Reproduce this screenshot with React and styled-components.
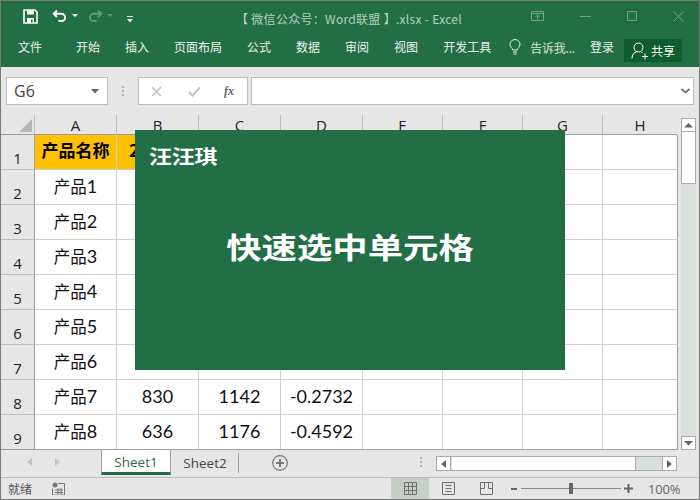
import React from 'react';
import styled, { createGlobalStyle } from 'styled-components';

const GREEN = '#226f46';
const CJK = '"Noto Sans CJK SC", "Noto Sans", sans-serif';
const CELLFONT = 'Lato, "Noto Sans CJK SC", sans-serif';

const Global = createGlobalStyle`
  html, body { margin: 0; padding: 0; }
  * { box-sizing: border-box; }
`;

const Win = styled.div`
  position: relative; width: 700px; height: 500px; overflow: hidden;
  border: 1px solid #7a7a7a; display: flex; flex-direction: column;
  background: #e6e6e6; font-family: ${CJK};
`;
const Title = styled.div`
  height: 33px; background: ${GREEN}; display: grid; grid-template-columns: 130px 1fr 168px; align-items: center;
  color: #a6c7b5; font-size: 12px; flex: none;
`;
const Qat = styled.div`display: flex; align-items: center; padding-left: 22px; height: 100%;`;
const TitleText = styled.div`
  text-align: center; font-size: 12px; letter-spacing: .3px; padding-left: 36px; white-space: nowrap; margin-top: 1px;
  font-family: "Noto Sans CJK SC", sans-serif; color: #b5d0c1;
`;
const WinBtns = styled.div`display: flex; align-items: center; height: 100%;`;
const WinBtn = styled.svg`flex: none; margin-right: ${p => p.$mr || 0}px; margin-top: -2px;`;
const QatIcon = styled.svg`flex: none; margin-right: ${p => p.$mr || 0}px; margin-left: ${p => p.$ml || 0}px;`;
const Ribbon = styled.div`
  height: 33px; background: ${GREEN}; display: flex; align-items: center; padding-left: 17px; flex: none;
  color: #ebf3ee; font-size: 12px; padding-bottom: 7px;
`;
const Tab = styled.span`margin-right: ${p => p.$mr || 25}px; white-space: nowrap; line-height: 16px;`;
const Tell = styled.span`color: #d6e5dc; margin-right: 15px; white-space: nowrap; margin-left: 9px; letter-spacing: -.2px;`;
const Share = styled.div`
  width: 58px; height: 23px; background: #0f5c2e; display: flex; align-items: center; padding-left: 7px; gap: 2px; color: #f2f7f4;
  margin-top: 7px; margin-left: -4px;
`;
const FormulaBar = styled.div`
  height: 48px; display: flex; align-items: flex-start; padding: 10px 5px 0 5px; flex: none; background: #e6e6e6;
`;
const Box = styled.div`
  height: 28px; background: #fff; border: 1px solid #bdbdbd; display: flex; align-items: center; flex: none;
`;
const NameBox = styled(Box)`width: 102px; padding: 0 8px 0 7px; justify-content: space-between; font: 16px "Open Sans", sans-serif; color: #444;`;
const Dots = styled.div`
  width: 30px; flex: none; display: flex; flex-direction: column; align-items: center; justify-content: center; gap: 2px; height: 28px;
`;
const Dot = styled.i`width: 2px; height: 2px; background: #b5b5b5; display: block;`;
const FxBox = styled(Box)`width: 110px; padding-left: 12px; justify-content: flex-start;`;
const Fx = styled.span`font: italic 700 12px "Liberation Serif", serif; color: #666; margin-left: 23px;`;
const FormulaInput = styled(Box)`flex: 1; margin-left: 3px; justify-content: flex-end; padding-right: 3px;`;

const Main = styled.div`display: flex; flex: none; height: 335px;`;
const Sheet = styled.div`
  width: 677px; display: grid; flex: none; background: #fff;
  grid-template-columns: 34px repeat(4, 82px) repeat(3, 80px) 75px;
  grid-template-rows: 20px repeat(9, 35px);
  height: 335px; overflow: hidden; border-bottom: 1px solid #9e9e9e;
`;
const Corner = styled.div`
  background: #e6e6e6; border-right: 1px solid #bdbdbd; border-bottom: 1px solid #9e9e9e;
  display: flex; align-items: flex-end; justify-content: flex-end; padding: 0 2px 2px 0;
`;
const ColHead = styled.div`
  background: #e6e6e6; border-right: 1px solid ${p => p.$last ? '#e6e6e6' : '#bdbdbd'}; border-bottom: 1px solid #9e9e9e; color: #222;
  font: 15px "Open Sans", sans-serif; display: flex; align-items: center; justify-content: center; padding-top: 1px;
`;
const RowHead = styled.div`
  background: #e6e6e6; border-right: 1px solid #9e9e9e; border-bottom: 1px solid #bdbdbd; color: #222;
  font: 15px "Open Sans", sans-serif; display: flex; align-items: flex-end; justify-content: center; padding-bottom: 1px;
`;
const Cell = styled.div`
  border-right: 1px solid ${p => p.$last ? '#9e9e9e' : '#d4cfcf'}; border-bottom: 1px solid #d4cfcf; display: flex; align-items: center; justify-content: center;
  font-family: ${CELLFONT}; font-size: 18px; color: #111; padding-bottom: 3px; white-space: nowrap;
  ${p => p.$h && `background: #ffc000; font-size: 17px; font-weight: 700; color: #000; font-family: ${CJK}; padding-bottom: 5px;`}
`;
const Label = styled.span`font: 16.5px ${CJK};`;
const LabelNum = styled.span`font: 18px Lato, sans-serif;`;

const VScroll = styled.div`
  width: 15px; flex: none; margin-left: 3px; height: 335px; display: flex; flex-direction: column;
  background: linear-gradient(#e6e6e6 3px, #d8e0d9 3px);
`;
const VTop = styled.div`height: 17px; background: #e6e6e6; flex: none; display: flex; align-items: flex-end;`;
const SBtn = styled.div`
  width: 15px; height: 14px; background: #fff; border: 1px solid #ababab; display: flex; align-items: center; justify-content: center; flex: none;
`;
const VThumb = styled.div`height: 53px; margin-top: -1px; background: #fff; border: 1px solid #ababab; flex: none;`;
const VSpacer = styled.div`flex: 1;`;

const Tabs = styled.div`
  height: 28px; flex: none; display: flex; align-items: flex-start; background: #e6e6e6; border-bottom: 1px solid #bdbdbd;
`;
const Nav = styled.div`width: 100px; flex: none; display: flex; align-items: center; padding-left: 26px; gap: 23px; height: 24px;`;
const ActiveTab = styled.div`
  width: 70px; height: 25px; background: #fff; color: ${GREEN}; font: 13.5px "Open Sans", sans-serif; border: 1px solid #9e9e9e; border-top: none; border-bottom: 3px solid ${GREEN};
  display: flex; align-items: center; justify-content: center; padding-top: 1px; flex: none;
`;
const OtherTab = styled.div`
  width: 68px; color: #444; font: 13.5px "Open Sans", sans-serif; border-right: 1px solid #9e9e9e; display: flex; align-items: center; justify-content: center; padding-left: 1px; flex: none; height: 20px; margin-top: 3px;
`;
const Plus = styled.svg`margin: 5px 0 0 33px; flex: none;`;
const HDots = styled.div`margin-left: 132px; display: flex; flex-direction: column; gap: 2px; justify-content: center; height: 24px; width: 2px; flex: none;`;
const HScroll = styled.div`
  display: flex; margin-left: 14px; margin-top: 6px; height: 15px; width: 241px; background: #d8e0d9; border: 1px solid #ababab; flex: none; align-items: stretch;
`;
const HBtn = styled.div`width: 14px; background: #fff; display: flex; align-items: center; justify-content: center; flex: none; ${p => p.$r ? 'border-left: 1px solid #ababab;' : 'border-right: 1px solid #ababab;'}`;
const HThumb = styled.div`width: 184px; background: #fff; border-right: 1px solid #ababab; flex: none; margin-left: 1px;`;
const HTrack = styled.div`flex: 1;`;

const Status = styled.div`
  flex: 1; display: flex; align-items: stretch; color: #555; font-size: 12px; background: #e6e6e6;
`;
const Ready = styled.span`padding-left: 7px; width: 51px; line-height: 21px; flex: none;`;
const StatusIcon = styled.svg`margin-top: 4px; flex: none;`;
const View = styled.div`
  width: 38px; display: flex; align-items: center; justify-content: center; flex: none;
  ${p => p.$on && 'background: #c6cfc6;'}
`;
const Views = styled.div`margin-left: 326px; display: flex; flex: none;`;
const Zoom = styled.div`display: flex; align-items: center; margin-left: 6px; flex: none;`;
const ZSign = styled.svg`flex: none;`;
const Slider = styled.div`width: 100px; height: 1px; background: #8a8a8a; position: relative; margin: 0 3px 0 4px;`;
const Knob = styled.i`position: absolute; left: 48px; top: -5px; width: 4px; height: 11px; background: #666; display: block;`;
const Pct = styled.span`font: 13px "Open Sans", sans-serif; color: #666; margin-left: 15px; letter-spacing: -.2px;`;

const Card = styled.div`
  position: absolute; left: 134px; top: 129px; width: 430px; height: 240px; background: ${GREEN}; color: #fff;
  display: flex; flex-direction: column; font-family: ${CJK}; font-weight: 700;
`;
const CardName = styled.div`font-size: 19px; line-height: 20px; padding: 16px 0 0 14px; transform: scaleX(1.2); transform-origin: 14px 0;`;
const CardHead = styled.div`font-size: 29px; line-height: 36px; text-align: center; margin-top: 62px; transform: scaleX(1.22);`;

const Tri = ({ d, c = '#666', w = 9, h = 9, vb = '0 0 9 9' }) => <svg width={w} height={h} viewBox={vb}><path d={d} fill={c} /></svg>;

const cols = ['A', 'B', 'C', 'D', 'E', 'F', 'G', 'H'];
const rows = [
  ['产品1', '', '', ''], ['产品2', '', '', ''], ['产品3', '', '', ''], ['产品4', '', '', ''],
  ['产品5', '', '', ''], ['产品6', '', '', ''], ['产品7', '830', '1142', '-0.2732'], ['产品8', '636', '1176', '-0.4592'],
];

const prod = s => <><Label>{s.slice(0, 2)}</Label><LabelNum>{s.slice(2)}</LabelNum></>;

export default function App() {
  return (
    <Win>
      <Global />
      <Title>
        <Qat>
          <QatIcon width="15" height="15" viewBox="0 0 15 15" $mr={14} style={{ marginTop: -2 }}>
            <path d="M1 1h11l2 2v11H1z" fill="none" stroke="#fff" strokeWidth="1.6" />
            <path d="M4 1.500h7v4H4zM4 9h7v5H4z" fill="#fff" />
            <path d="M8 10.500h1.600v3H8z" fill={GREEN} />
          </QatIcon>
          <QatIcon width="16" height="14" viewBox="0 0 16 14" $mr={4} style={{ marginTop: -3 }}>
            <path d="M5 1.500L1.800 4.800 5 8M2 4.800h7.500a3.600 3.600 0 0 1 0 7.200H6.500" fill="none" stroke="#fff" strokeWidth="2" />
          </QatIcon>
          <QatIcon width="6" height="4" viewBox="0 0 6 4" $mr={9} style={{ marginTop: -3 }}><path d="M0 0h6L3 3z" fill="#fff" /></QatIcon>
          <QatIcon width="16" height="14" viewBox="0 0 16 14" $mr={4} style={{ marginTop: -3 }}>
            <path d="M11 1.500l3.200 3.300L11 8M14 4.800H6.500a3.600 3.600 0 0 0 0 7.200h3" fill="none" stroke="#5c9a78" strokeWidth="2" />
          </QatIcon>
          <QatIcon width="6" height="4" viewBox="0 0 6 4" $mr={14} style={{ marginTop: -3 }}><path d="M0 0h6L3 3z" fill="#5c9a78" /></QatIcon>
          <QatIcon width="6" height="7" viewBox="0 0 6 7" style={{ marginTop: 3 }}><path d="M0 0h6v1H0zM0 3h6L3 6.500z" fill="#e6efe9" /></QatIcon>
        </Qat>
        <TitleText>【 微信公众号：Word联盟 】.xlsx - Excel</TitleText>
        <WinBtns>
          <WinBtn width="14" height="11" viewBox="0 0 14 11" $mr={35}>
            <path d="M.5.500h12v9H.5zM.5 2.500h12M6.500 8.500V4.200M4.500 6l2-2 2 2" fill="none" stroke="#6fa388" />
          </WinBtn>
          <WinBtn width="11" height="2" viewBox="0 0 11 2" $mr={36}><path d="M0 .5h11" stroke="#6fa388" /></WinBtn>
          <WinBtn width="11" height="11" viewBox="0 0 11 11" $mr={35}><path d="M.5.500h9v9h-9z" fill="none" stroke="#6fa388" /></WinBtn>
          <WinBtn width="11" height="11" viewBox="0 0 11 11"><path d="M.5.500l10 10M10.500.5l-10 10" fill="none" stroke="#6fa388" /></WinBtn>
        </WinBtns>
      </Title>
      <Ribbon>
        <Tab $mr={34}>文件</Tab>
        <Tab>开始</Tab><Tab>插入</Tab><Tab>页面布局</Tab><Tab>公式</Tab><Tab>数据</Tab><Tab>审阅</Tab><Tab>视图</Tab><Tab $mr={18}>开发工具</Tab>
        <svg width="12" height="16" viewBox="0 0 12 16" fill="none" stroke="#e6efe9">
          <path d="M3.800 11C3.500 9 1 8 1 5.500a5 5 0 0 1 10 0C11 8 8.500 9 8.200 11zM4 13h4M4.500 15h3" />
        </svg>
        <Tell>告诉我...</Tell>
        <Tab $mr={14}>登录</Tab>
        <Share>
          <svg width="18" height="18" viewBox="0 0 18 18" fill="none" stroke="#fff">
            <circle cx="7.500" cy="5.500" r="4.500" /><path d="M1 16.500c0-4 2-6 5-7M10.500 10l1 1M11 14.500h6M14 11.500v6" />
          </svg>
          共享
        </Share>
      </Ribbon>
      <FormulaBar>
        <NameBox>G6<Tri d="M0 0h8L4 4.500z" w={8} h={5} vb="0 0 8 5" /></NameBox>
        <Dots><Dot /><Dot /><Dot /></Dots>
        <FxBox>
          <svg width="11" height="11" viewBox="0 0 11 11" fill="none" stroke="#c4c4c4" strokeWidth="1.6"><path d="M1 1l9 9M10 1l-9 9" /></svg>
          <svg width="13" height="11" viewBox="0 0 13 11" fill="none" stroke="#c4c4c4" strokeWidth="2" style={{ marginLeft: 26 }}><path d="M1 6l3.500 3.500L12 1.500" /></svg>
          <Fx>fx</Fx>
        </FxBox>
        <FormulaInput>
          <svg width="9" height="6" viewBox="0 0 9 6" fill="none" stroke="#666" strokeWidth="1.700"><path d="M.5.800l4 3.500 4-3.500" /></svg>
        </FormulaInput>
      </FormulaBar>
      <Main>
        <Sheet>
          <Corner><Tri d="M13 0v13H0z" c="#b5b5b5" w={13} h={13} vb="0 0 13 13" /></Corner>
          {cols.map(c => <ColHead key={c} $last={c === 'H'}>{c}</ColHead>)}
          <RowHead>1</RowHead>
          <Cell $h>产品名称</Cell>
          <Cell $h>2018年</Cell>
          {cols.slice(2).map(c => <Cell key={c} $last={c === 'H'} />)}
          {rows.map((r, i) => (
            <React.Fragment key={i}>
              <RowHead>{i + 2}</RowHead>
              <Cell>{prod(r[0])}</Cell>
              <Cell>{r[1]}</Cell>
              <Cell>{r[2]}</Cell>
              <Cell>{r[3]}</Cell>
              <Cell /><Cell /><Cell /><Cell $last />
            </React.Fragment>
          ))}
        </Sheet>
        <VScroll>
          <VTop><SBtn><Tri d="M0 4.500L4.500 0 9 4.500z" w={9} h={5} vb="0 0 9 5" /></SBtn></VTop>
          <VThumb />
          <VSpacer />
          <SBtn><Tri d="M0 0h9L4.500 4.500z" w={9} h={5} vb="0 0 9 5" /></SBtn>
        </VScroll>
      </Main>
      <Tabs>
        <Nav>
          <Tri d="M5 0v8L0 4z" c="#c2c2c2" w={5} h={8} vb="0 0 5 8" />
          <Tri d="M0 0v8l5-4z" c="#c2c2c2" w={5} h={8} vb="0 0 5 8" />
        </Nav>
        <ActiveTab>Sheet1</ActiveTab>
        <OtherTab>Sheet2</OtherTab>
        <Plus width="16" height="16" viewBox="0 0 16 16" fill="none" stroke="#777">
          <circle cx="8" cy="8" r="7.300" strokeWidth="1.200" /><path d="M4 8h8M8 4v8" strokeWidth="2" />
        </Plus>
        <HDots><Dot /><Dot /><Dot /></HDots>
        <HScroll>
          <HBtn><Tri d="M5 0v8L0 4z" w={5} h={8} vb="0 0 5 8" /></HBtn>
          <HThumb />
          <HTrack />
          <HBtn $r><Tri d="M0 0v8l5-4z" w={5} h={8} vb="0 0 5 8" /></HBtn>
        </HScroll>
      </Tabs>
      <Status>
        <Ready>就绪</Ready>
        <StatusIcon width="13" height="13" viewBox="0 0 13 13">
          <circle cx="3" cy="3" r="2.500" fill="#777" />
          <path d="M6 1.500h6.500V13H.5V6.500M3 8h8M3 10.500h8M6 6v6M9 6v6" fill="none" stroke="#777" />
        </StatusIcon>
        <Views>
          <View $on>
            <svg width="13" height="13" viewBox="0 0 13 13" fill="none" stroke="#707070"><path d="M.5.500h12v12H.5zM.5 4.500h12M.5 8.500h12M4.500.5v12M8.500.5v12" /></svg>
          </View>
          <View>
            <svg width="13" height="13" viewBox="0 0 13 13" fill="none" stroke="#707070"><path d="M.5.500h12v12H.5zM3.500 3.500h6M3.500 6.500h6M3.500 9.500h6" /></svg>
          </View>
          <View>
            <svg width="13" height="13" viewBox="0 0 13 13" fill="none" stroke="#707070"><path d="M.5.500h12v12H.5zM.5 6.500h4V.5M8.500.5v6h4" /></svg>
          </View>
        </Views>
        <Zoom>
          <ZSign width="6" height="2" viewBox="0 0 6 2"><path d="M0 0h6v2H0z" fill="#666" /></ZSign>
          <Slider><Knob /></Slider>
          <ZSign width="9" height="9" viewBox="0 0 9 9"><path d="M0 3.500h9v2H0zM3.500 0h2v9h-2z" fill="#666" /></ZSign>
          <Pct>100%</Pct>
        </Zoom>
      </Status>
      <Card>
        <CardName>汪汪琪</CardName>
        <CardHead>快速选中单元格</CardHead>
      </Card>
    </Win>
  );
}
